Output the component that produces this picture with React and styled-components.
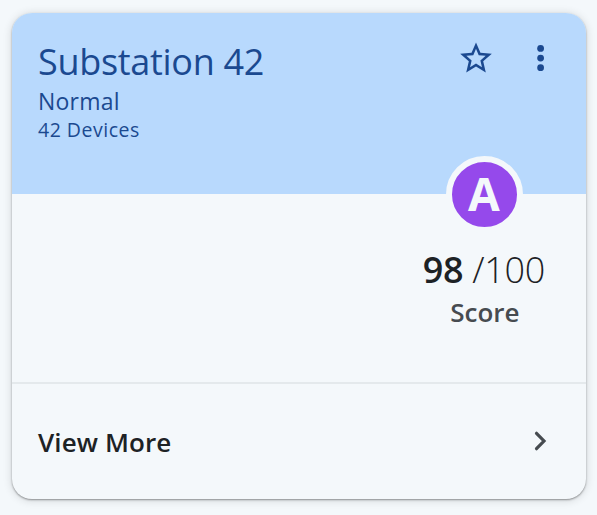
import React from "react";
import styled, { createGlobalStyle } from "styled-components";

const GlobalStyle = createGlobalStyle`
  *, *::before, *::after { box-sizing: border-box; }
  body {
    margin: 0;
    background: #f4f8fb;
    font-family: "Open Sans", sans-serif;
    overflow: hidden;
  }
`;

const Page = styled.main`
  height: 515px;
  padding: 13px 11px 16px 12px;
`;

const Card = styled.article`
  height: 100%;
  display: flex;
  flex-direction: column;
  border-radius: 20px;
  background: #f4f8fb;
  box-shadow: 0 1px 2px rgba(0, 0, 0, 0.38), 0 1px 8px 1px rgba(0, 0, 0, 0.12);
`;

const Header = styled.header`
  height: 180.5px;
  flex: none;
  display: flex;
  justify-content: space-between;
  padding: 27px 32px 0 26px;
  border-radius: 20px 20px 0 0;
  background: #b8d9fd;
  color: #1b4990;
`;

const Title = styled.h1`
  margin: 1px 0 2px;
  font-size: 36px;
  line-height: 42px;
  letter-spacing: -0.3px;
  font-weight: 400;
`;

const Status = styled.p`
  margin: 0;
  font-size: 23px;
  line-height: 33px;
  letter-spacing: 0.2px;
`;

const Devices = styled.p`
  margin: 0;
  font-size: 19.5px;
  line-height: 24px;
  letter-spacing: 0.5px;
`;

const Actions = styled.div`
  display: flex;
  align-items: flex-start;
  gap: 33px;
`;

const IconButton = styled.button`
  display: flex;
  padding: 0;
  border: 0;
  background: none;
  color: inherit;
`;

const Body = styled.section`
  height: 188.5px;
  flex: none;
  display: flex;
  justify-content: flex-end;
  padding-right: 41px;
`;

const ScoreBlock = styled.div`
  display: flex;
  flex-direction: column;
  align-items: center;
`;

const Grade = styled.div`
  width: 77px;
  height: 77px;
  margin: -38px 0 0 1px;
  padding: 0 1px 2px 0;
  display: flex;
  align-items: center;
  justify-content: center;
  border: 6px solid #f4f8fb;
  border-radius: 50%;
  background: #9549eb;
  color: #f4f8fb;
  font-size: 46px;
  line-height: 1;
  font-weight: 680;
`;

const Score = styled.div`
  margin-top: 13px;
  font-size: 36px;
  line-height: 48px;
  letter-spacing: -0.3px;
  font-weight: 300;
  color: #1d2225;
  white-space: nowrap;
`;

const Value = styled.span`
  font-weight: 650;
`;

const ScoreLabel = styled.div`
  padding-left: 2px;
  font-size: 26px;
  line-height: 37px;
  font-weight: 590;
  color: #464b50;
`;

const Footer = styled.footer`
  flex: 1;
  display: flex;
  align-items: center;
  justify-content: space-between;
  padding: 0 39px 0 26px;
  border-top: 2px solid #e4e9ec;
  color: #1d2225;
  font-size: 26px;
  letter-spacing: 0.1px;
  font-weight: 590;
`;

const Chevron = styled.svg`
  margin-bottom: 2px;
`;

export default function App() {
  return (
    <>
      <GlobalStyle />
      <Page>
        <Card>
          <Header>
            <div>
              <Title>Substation 42</Title>
              <Status>Normal</Status>
              <Devices>42 Devices</Devices>
            </div>
            <Actions>
              <IconButton aria-label="Favorite">
                <svg width="38" height="38" viewBox="0 0 24 24" fill="currentColor">
                  <path transform="translate(0 -0.5)" d="M22 9.24l-7.19-.62L12 2 9.19 8.63 2 9.24l5.46 4.73L5.82 21 12 17.27 18.18 21l-1.63-7.03L22 9.24zM12 15.4l-3.76 2.27 1-4.28-3.32-2.88 4.38-.38L12 6.1l1.71 4.04 4.38.38-3.32 2.88 1 4.28L12 15.4z" />
                </svg>
              </IconButton>
              <IconButton aria-label="More options">
                <svg width="26" height="38" viewBox="0 0 26 38" fill="currentColor">
                  <circle cx="12.6" cy="8.4" r="3.4" />
                  <circle cx="12.6" cy="18.1" r="3.4" />
                  <circle cx="12.6" cy="27.7" r="3.4" />
                </svg>
              </IconButton>
            </Actions>
          </Header>
          <Body>
            <ScoreBlock>
              <Grade>A</Grade>
              <Score><Value>98</Value> /100</Score>
              <ScoreLabel>Score</ScoreLabel>
            </ScoreBlock>
          </Body>
          <Footer>
            <span>View More</span>
            <Chevron width="13" height="20" viewBox="0 0 13 20" fill="none" stroke="#464b50" strokeWidth="3.2" strokeLinecap="round">
              <path d="M2.5 2.3L10 10L2.5 17.7" />
            </Chevron>
          </Footer>
        </Card>
      </Page>
    </>
  );
}
